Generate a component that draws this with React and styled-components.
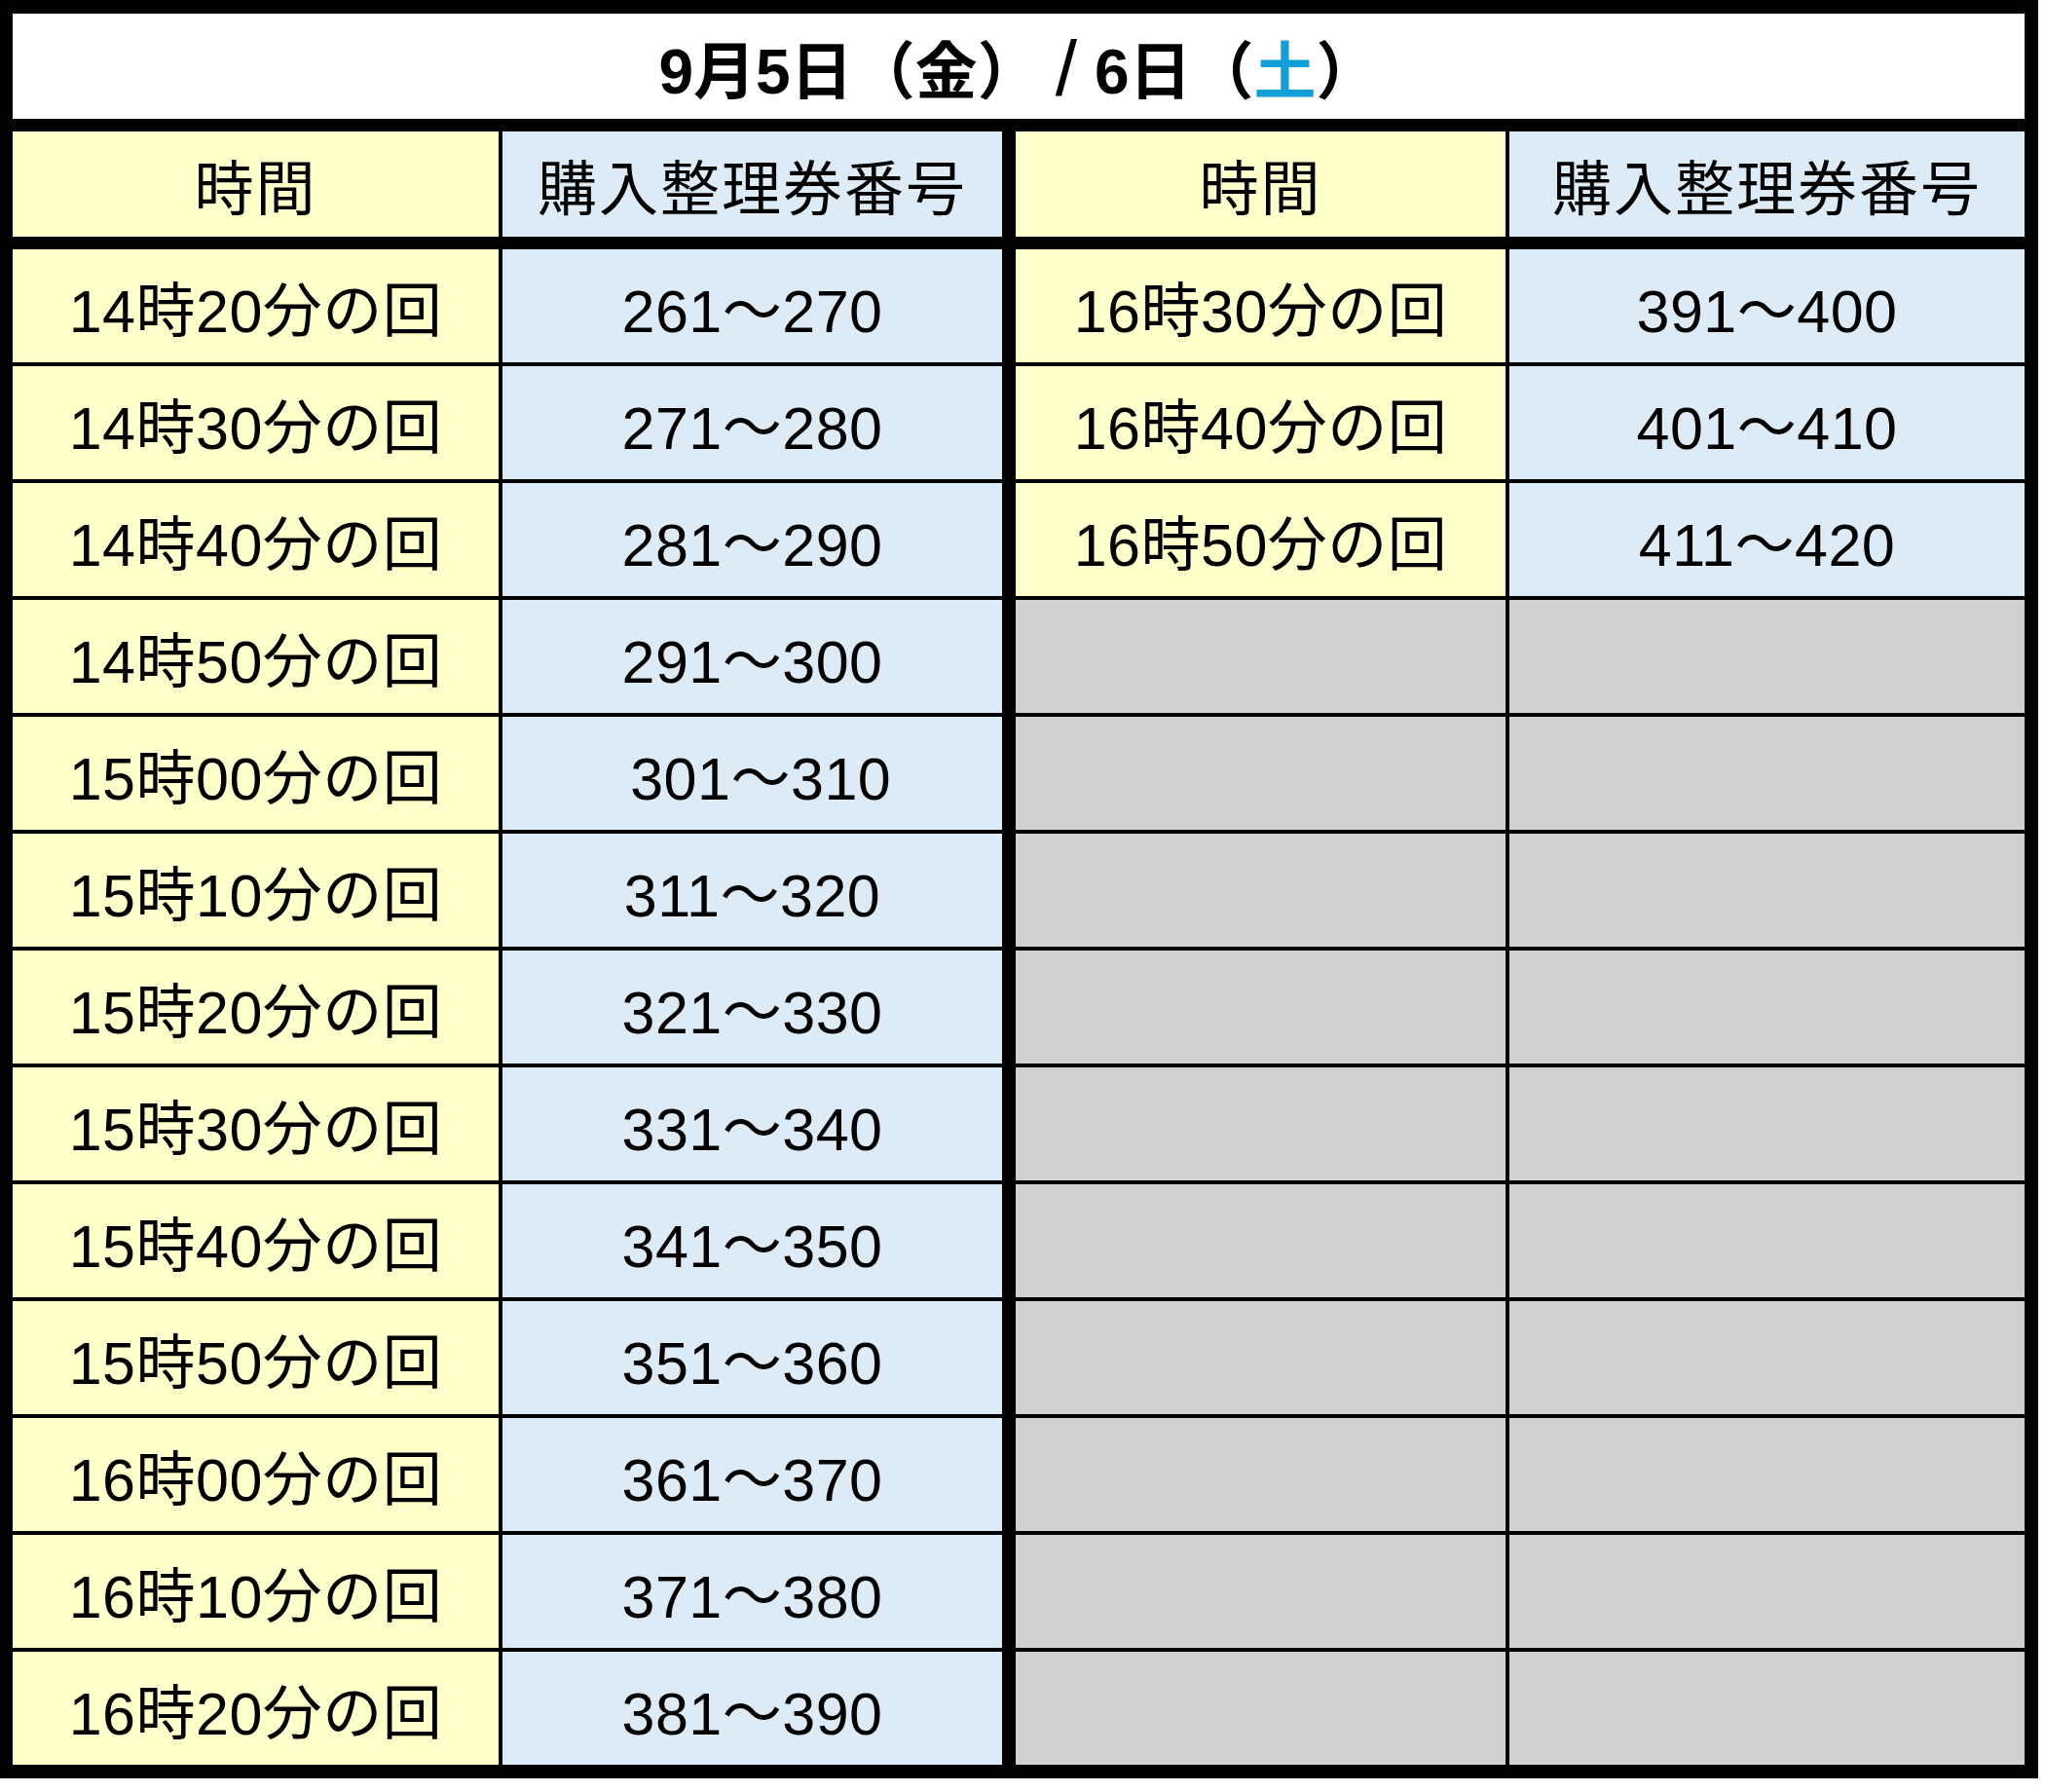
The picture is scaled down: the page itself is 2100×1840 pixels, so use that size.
import React from "react";
import styled, { createGlobalStyle } from "styled-components";

const GlobalStyle = createGlobalStyle`
  body {
    margin: 0;
    background: #ffffff;
    font-family: "Liberation Sans", "Noto Sans CJK JP", sans-serif;
  }
`;

const Table = styled.div`
  width: 2093px;
  box-sizing: border-box;
  background: #000000;
  border-style: solid;
  border-color: #000000;
  border-width: 14px 14px 14px 13px;
  display: flex;
  flex-direction: column;
  gap: 13px;
`;

const TitleBar = styled.div`
  height: 108px;
  background: #ffffff;
  display: flex;
  align-items: center;
  justify-content: center;
`;

const TitleText = styled.span`
  font-size: 64px;
  font-weight: 700;
  color: #000000;
  white-space: pre;
`;

const Slash = styled.span`
  font-weight: 400;
  font-size: 80px;
  line-height: 1;
  vertical-align: -2px;
  margin: 0 18px 0 16px;
`;

const Sat = styled.span`
  color: #129fd9;
`;

const Halves = styled.div`
  display: flex;
  gap: 14px;
`;

const Half = styled.div`
  display: flex;
  flex-direction: column;
  gap: 13px;
`;

const Grid = styled.div`
  display: grid;
  grid-template-columns: ${(p) => p.$cols};
  grid-auto-rows: ${(p) => (p.$head ? "108px" : "116px")};
  gap: 4px;
`;

const tones = {
  time: "#ffffcc",
  num: "#ddebf7",
  empty: "#d0d0d0",
};

const Cell = styled.div`
  background: ${(p) => tones[p.$tone]};
  display: flex;
  align-items: center;
  justify-content: center;
  font-size: 61px;
  color: #000000;
  white-space: pre;
  letter-spacing: ${(p) => (p.$head ? "2px" : "0.5px")};
`;

const friday = [
  ["14時20分の回", "261～270"],
  ["14時30分の回", "271～280"],
  ["14時40分の回", "281～290"],
  ["14時50分の回", "291～300"],
  ["15時00分の回", " 301～310"],
  ["15時10分の回", "311～320"],
  ["15時20分の回", "321～330"],
  ["15時30分の回", "331～340"],
  ["15時40分の回", "341～350"],
  ["15時50分の回", "351～360"],
  ["16時00分の回", "361～370"],
  ["16時10分の回", "371～380"],
  ["16時20分の回", "381～390"],
];

const saturday = [
  ["16時30分の回", "391～400"],
  ["16時40分の回", "401～410"],
  ["16時50分の回", "411～420"],
];

const DayColumns = ({ cols, rows }) => (
  <Half>
    <Grid $cols={cols} $head>
      <Cell $tone="time" $head>
        時間
      </Cell>
      <Cell $tone="num" $head>
        購入整理券番号
      </Cell>
    </Grid>
    <Grid $cols={cols}>
      {Array.from({ length: 13 }).map((_, i) =>
        rows[i] ? (
          <React.Fragment key={i}>
            <Cell $tone="time">{rows[i][0]}</Cell>
            <Cell $tone="num">{rows[i][1]}</Cell>
          </React.Fragment>
        ) : (
          <React.Fragment key={i}>
            <Cell $tone="empty" />
            <Cell $tone="empty" />
          </React.Fragment>
        )
      )}
    </Grid>
  </Half>
);

const App = () => {
  return (
    <>
      <GlobalStyle />
      <Table>
        <TitleBar>
          <TitleText>
            9月5日（金）<Slash>/</Slash>6日（<Sat>土</Sat>）
          </TitleText>
        </TitleBar>
        <Halves>
          <DayColumns cols="499px 513px" rows={friday} />
          <DayColumns cols="503px 529px" rows={saturday} />
        </Halves>
      </Table>
    </>
  );
};

export default App;
